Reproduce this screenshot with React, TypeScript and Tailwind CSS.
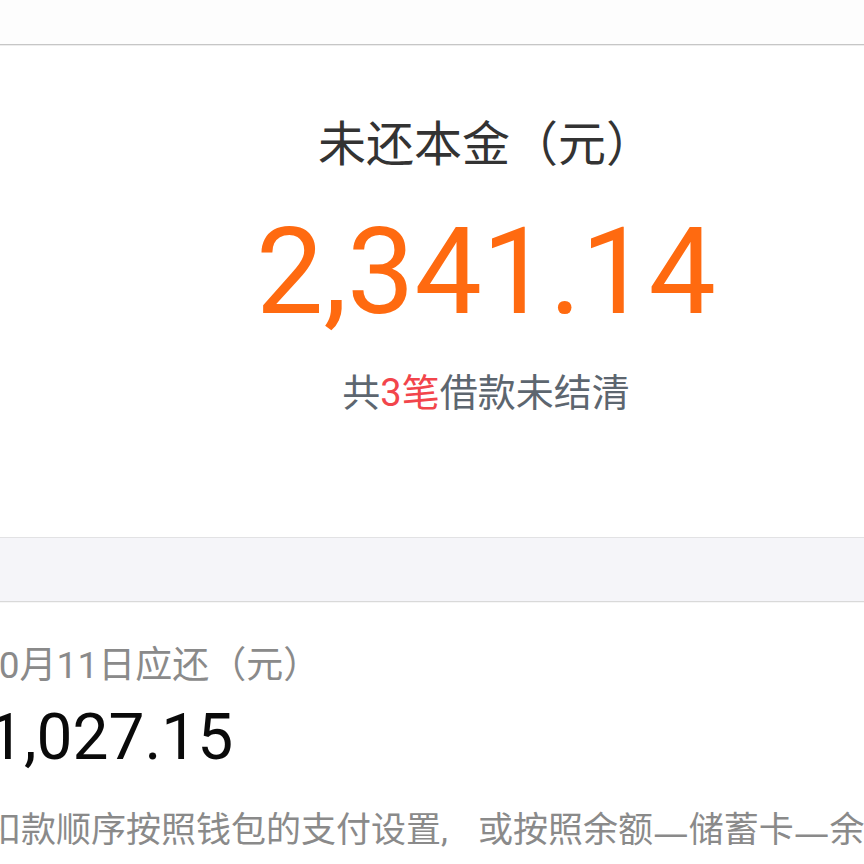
export default function App() {
  const font = { fontFamily: 'Roboto, "Noto Sans CJK SC", sans-serif' };
  return (
    <div className="w-[864px] h-[864px] overflow-hidden bg-white" style={font}>
      <div className="w-[1080px] -ml-[54px] flex flex-col">
        <div className="h-[45px] bg-[#fdfdfd] border-b border-[#c6c6c6]" />
        <div className="h-px bg-[#ededed]" />
        <div className="flex flex-col items-center bg-white h-[491px]">
          <div className="mt-[75px] text-[48px] leading-[48px] text-[#333333]">未还本金（元）</div>
          <div className="mt-[43px] text-[120px] leading-[120px] text-[#ff6a10]">2,341.14</div>
          <div className="mt-[42px] text-[38px] leading-[38px] text-[#5d666f]">
            共<span className="text-[#f2454b]">3笔</span>借款未结清
          </div>
        </div>
        <div className="h-[65px] bg-[#f5f5f9] border-t border-[#e2e2e4] border-b border-b-[#d9d9d9]" />
        <div className="h-px bg-[#f6f6f6]" />
        <div className="flex flex-col bg-white">
          <div className="ml-[32px] mt-[44px] text-[37px] leading-[37px] text-[#8a8a8a]">10月11日应还（元）</div>
          <div className="ml-[42px] mt-[22px] text-[64px] leading-[64px] text-[#0a0a0a]">1,027.15</div>
          <div className="ml-[40px] mt-[43px] text-[35px] leading-[35px] text-[#8a8a8a] whitespace-nowrap flex items-center">
            <span>扣款顺序按照钱包的支付设置,</span>
            <span className="ml-[30px]">或按照余额</span>
            <span className="inline-block w-[54px] text-center text-[40px] leading-[35px] font-['Noto_Sans_CJK_SC']">—</span>
            <span>储蓄卡</span>
            <span className="inline-block w-[54px] text-center text-[40px] leading-[35px] font-['Noto_Sans_CJK_SC']">—</span>
            <span>余额宝的顺序扣款</span>
          </div>
        </div>
      </div>
    </div>
  );
}
